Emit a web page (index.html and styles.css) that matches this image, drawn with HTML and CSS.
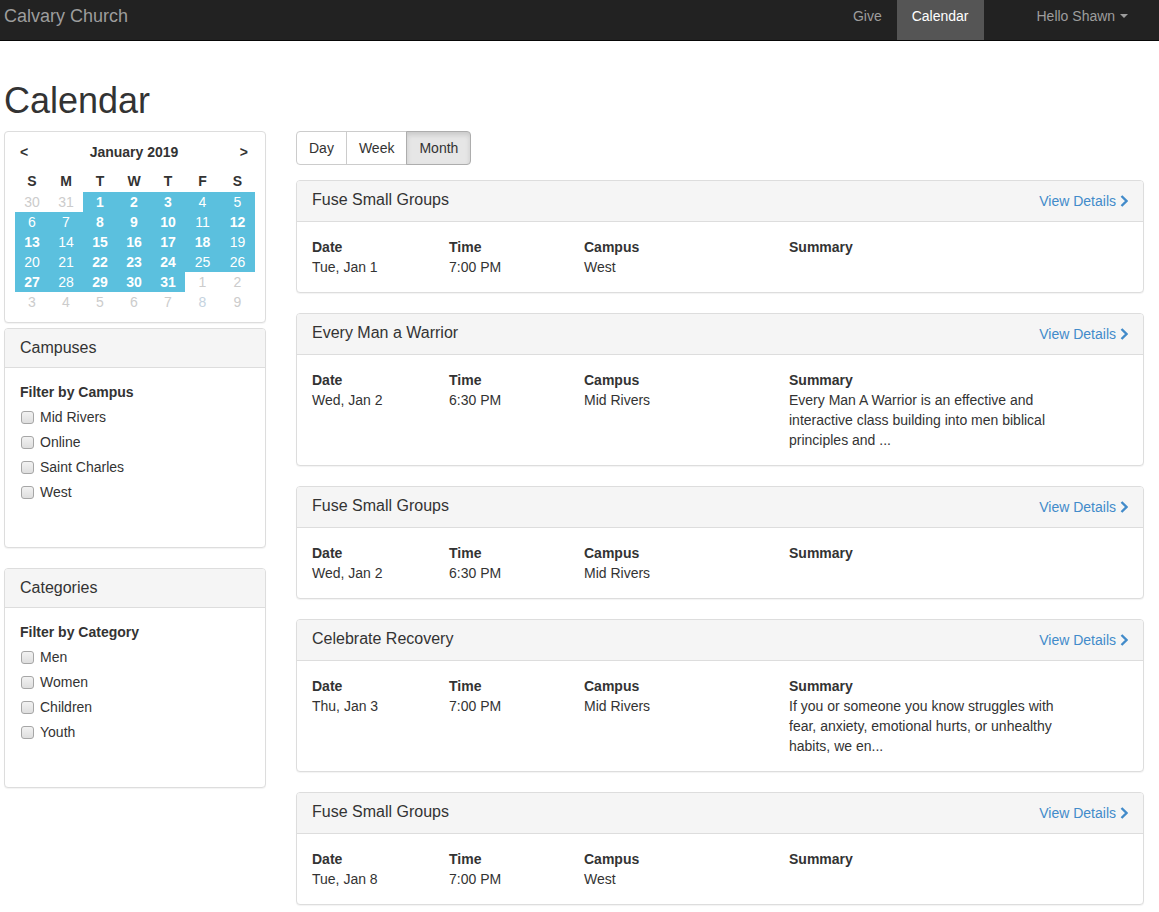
FILE: index.html
```html
<!DOCTYPE html>
<html>
<head>
<meta charset="utf-8">
<title>Calendar</title>
<link rel="stylesheet" href="styles.css">
</head>
<body>
<nav class="navbar">
  <a class="brand">Calvary Church</a>
  <ul class="nav">
    <li><a>Give</a></li>
    <li class="active"><a>Calendar</a></li>
    <li class="user"><a>Hello Shawn <span class="caret"></span></a></li>
  </ul>
</nav>

<div class="page">
  <h1>Calendar</h1>
  <div class="layout">
    <aside class="sidebar">
      <div class="panel cal">
        <div class="cal-head"><span class="arrow">&lt;</span><span class="month">January 2019</span><span class="arrow">&gt;</span></div>
        <div class="cal-grid">
          <div class="dow">S</div><div class="dow">M</div><div class="dow">T</div><div class="dow">W</div><div class="dow">T</div><div class="dow">F</div><div class="dow">S</div>

          <div class="d out">30</div><div class="d out">31</div><div class="d in b">1</div><div class="d in b">2</div><div class="d in b">3</div><div class="d in">4</div><div class="d in">5</div>
          <div class="d in">6</div><div class="d in">7</div><div class="d in b">8</div><div class="d in b">9</div><div class="d in b">10</div><div class="d in">11</div><div class="d in b">12</div>
          <div class="d in b">13</div><div class="d in">14</div><div class="d in b">15</div><div class="d in b">16</div><div class="d in b">17</div><div class="d in b">18</div><div class="d in">19</div>
          <div class="d in">20</div><div class="d in">21</div><div class="d in b">22</div><div class="d in b">23</div><div class="d in b">24</div><div class="d in">25</div><div class="d in">26</div>
          <div class="d in b">27</div><div class="d in">28</div><div class="d in b">29</div><div class="d in b">30</div><div class="d in b">31</div><div class="d out">1</div><div class="d out">2</div>
          <div class="d out">3</div><div class="d out">4</div><div class="d out">5</div><div class="d out">6</div><div class="d out">7</div><div class="d out blueish">8</div><div class="d out">9</div>
        </div>
      </div>

      <div class="panel filter first">
        <div class="panel-heading">Campuses</div>
        <div class="panel-body">
          <div class="filter-label">Filter by Campus</div>
          <label class="check"><input type="checkbox"> Mid Rivers</label>
          <label class="check"><input type="checkbox"> Online</label>
          <label class="check"><input type="checkbox"> Saint Charles</label>
          <label class="check"><input type="checkbox"> West</label>
        </div>
      </div>

      <div class="panel filter">
        <div class="panel-heading">Categories</div>
        <div class="panel-body">
          <div class="filter-label">Filter by Category</div>
          <label class="check"><input type="checkbox"> Men</label>
          <label class="check"><input type="checkbox"> Women</label>
          <label class="check"><input type="checkbox"> Children</label>
          <label class="check"><input type="checkbox"> Youth</label>
        </div>
      </div>
    </aside>

    <main class="main">
      <div class="btn-group">
        <button class="btn">Day</button><button class="btn">Week</button><button class="btn active">Month</button>
      </div>

      <div class="panel event">
        <div class="panel-heading event-head"><span class="title">Fuse Small Groups</span><a class="details">View Details <svg class="chev" viewBox="0 0 8 12" width="8" height="12"><path d="M1.5 1 L6.5 6 L1.5 11" fill="none" stroke="currentColor" stroke-width="2.4"/></svg></a></div>
        <div class="event-body">
          <div><div class="lbl">Date</div>Tue, Jan 1</div>
          <div><div class="lbl">Time</div>7:00 PM</div>
          <div><div class="lbl">Campus</div>West</div>
          <div class="summary"><div class="lbl">Summary</div></div>
        </div>
      </div>

      <div class="panel event">
        <div class="panel-heading event-head"><span class="title">Every Man a Warrior</span><a class="details">View Details <svg class="chev" viewBox="0 0 8 12" width="8" height="12"><path d="M1.5 1 L6.5 6 L1.5 11" fill="none" stroke="currentColor" stroke-width="2.4"/></svg></a></div>
        <div class="event-body">
          <div><div class="lbl">Date</div>Wed, Jan 2</div>
          <div><div class="lbl">Time</div>6:30 PM</div>
          <div><div class="lbl">Campus</div>Mid Rivers</div>
          <div class="summary"><div class="lbl">Summary</div>Every Man A Warrior is an effective and interactive class building into men biblical principles and ...</div>
        </div>
      </div>

      <div class="panel event">
        <div class="panel-heading event-head"><span class="title">Fuse Small Groups</span><a class="details">View Details <svg class="chev" viewBox="0 0 8 12" width="8" height="12"><path d="M1.5 1 L6.5 6 L1.5 11" fill="none" stroke="currentColor" stroke-width="2.4"/></svg></a></div>
        <div class="event-body">
          <div><div class="lbl">Date</div>Wed, Jan 2</div>
          <div><div class="lbl">Time</div>6:30 PM</div>
          <div><div class="lbl">Campus</div>Mid Rivers</div>
          <div class="summary"><div class="lbl">Summary</div></div>
        </div>
      </div>

      <div class="panel event">
        <div class="panel-heading event-head"><span class="title">Celebrate Recovery</span><a class="details">View Details <svg class="chev" viewBox="0 0 8 12" width="8" height="12"><path d="M1.5 1 L6.5 6 L1.5 11" fill="none" stroke="currentColor" stroke-width="2.4"/></svg></a></div>
        <div class="event-body">
          <div><div class="lbl">Date</div>Thu, Jan 3</div>
          <div><div class="lbl">Time</div>7:00 PM</div>
          <div><div class="lbl">Campus</div>Mid Rivers</div>
          <div class="summary"><div class="lbl">Summary</div>If you or someone you know struggles with fear, anxiety, emotional hurts, or unhealthy habits, we en...</div>
        </div>
      </div>

      <div class="panel event">
        <div class="panel-heading event-head"><span class="title">Fuse Small Groups</span><a class="details">View Details <svg class="chev" viewBox="0 0 8 12" width="8" height="12"><path d="M1.5 1 L6.5 6 L1.5 11" fill="none" stroke="currentColor" stroke-width="2.4"/></svg></a></div>
        <div class="event-body">
          <div><div class="lbl">Date</div>Tue, Jan 8</div>
          <div><div class="lbl">Time</div>7:00 PM</div>
          <div><div class="lbl">Campus</div>West</div>
          <div class="summary"><div class="lbl">Summary</div></div>
        </div>
      </div>
    </main>
  </div>
</div>
</body>
</html>
```

FILE: styles.css
```css
* { box-sizing: border-box; }
html, body { margin: 0; padding: 0; }
body {
  font-family: "Liberation Sans", Arial, Helvetica, sans-serif;
  font-size: 14px;
  line-height: 20px;
  color: #333;
  background: #fff;
}

/* navbar */
.navbar {
  height: 41px;
  background: #222;
  border-bottom: 1px solid #080808;
  display: flex;
  align-items: stretch;
  justify-content: space-between;
  padding: 0 16px 0 4px;
}
.brand {
  font-size: 18px;
  color: #9d9d9d;
  line-height: 20px;
  padding-top: 6px;
}
.nav {
  list-style: none;
  margin: 0;
  padding: 0;
  display: flex;
}
.nav li a {
  display: block;
  height: 40px;
  padding: 6px 15px 0;
  color: #9d9d9d;
}
.nav li.active a {
  background: #555;
  color: #fff;
}
.nav li.user { margin-left: 38px; }
.caret {
  display: inline-block;
  width: 0;
  height: 0;
  margin-left: 1px;
  vertical-align: middle;
  border-top: 4px solid #9d9d9d;
  border-left: 4px solid transparent;
  border-right: 4px solid transparent;
  position: relative;
  top: -1px;
}

/* page */
.page { padding: 0 15px 0 4px; }
h1 {
  font-size: 36px;
  font-weight: 500;
  line-height: 40px;
  margin: 40px 0 10px;
}
.layout {
  display: flex;
  gap: 30px;
  align-items: flex-start;
}
.sidebar { width: 262px; flex: none; }
.main { width: 848px; flex: none; }

.panel {
  background: #fff;
  border: 1px solid #ddd;
  border-radius: 4px;
  box-shadow: 0 1px 1px rgba(0,0,0,.05);
}
.panel-heading {
  background: #f5f5f5;
  border-bottom: 1px solid #ddd;
  border-radius: 3px 3px 0 0;
  padding: 9px 15px 9px;
  font-size: 16px;
  line-height: 20px;
  color: #333;
}

/* calendar */
.cal { padding: 10px; height: 192px; }
.cal-head {
  display: flex;
  justify-content: space-between;
  align-items: center;
  padding: 0 7px 0 5px;
  font-weight: bold;
  height: 20px;
  margin-bottom: 9px;
}
.cal-grid {
  display: grid;
  grid-template-columns: 34px 34px 34px 34px 34px 35px 35px;
  grid-template-rows: 21px;
  grid-auto-rows: 20px;
}
.dow {
  font-weight: bold;
  text-align: center;
}
.d { text-align: center; }
.d.out { color: #ccc; }
.d.out.blueish { color: #c5d3e0; }
.d.in { background: #5bc0de; color: #fff; }
.d.b { font-weight: bold; }

/* filters */
.filter { height: 220px; margin-top: 20px; }
.filter.first { margin-top: 5px; }
.filter .panel-body { padding: 14px 15px 15px; }
.filter-label { font-weight: bold; margin-bottom: 5px; }
.check {
  display: flex;
  align-items: center;
  height: 20px;
  margin-bottom: 5px;
}
.check input {
  -webkit-appearance: none;
  appearance: none;
  width: 13px;
  height: 13px;
  margin: 0 6px 0 1px;
  border: 1px solid #a6a6a6;
  border-radius: 3px;
  background: linear-gradient(#f2f2f2, #dedede);
  flex: none;
}

/* button group */
.btn-group { display: flex; margin-bottom: 15px; }
.btn {
  font-family: inherit;
  font-size: 14px;
  line-height: 20px;
  color: #333;
  background: #fff;
  border: 1px solid #ccc;
  padding: 6px 12px;
  margin: 0;
  margin-left: -1px;
  cursor: pointer;
}
.btn:first-child { margin-left: 0; border-radius: 4px 0 0 4px; }
.btn:last-child { border-radius: 0 4px 4px 0; }
.btn.active {
  background: #e6e6e6;
  border-color: #adadad;
  box-shadow: inset 0 3px 5px rgba(0,0,0,.125);
}

/* events */
.event { margin-bottom: 20px; }
.event-head {
  display: flex;
  justify-content: space-between;
  align-items: baseline;
  padding: 9px 15px 11px;
  height: 41px;
}
.details {
  font-size: 14px;
  color: #428bca;
  display: flex;
  align-items: center;
  gap: 4px;
  position: relative;
  top: 1px;
}
.chev { display: block; }
.event-body {
  display: grid;
  grid-template-columns: 137px 135px 205px 275px;
  padding: 15px;
}
.lbl { font-weight: bold; }
```
